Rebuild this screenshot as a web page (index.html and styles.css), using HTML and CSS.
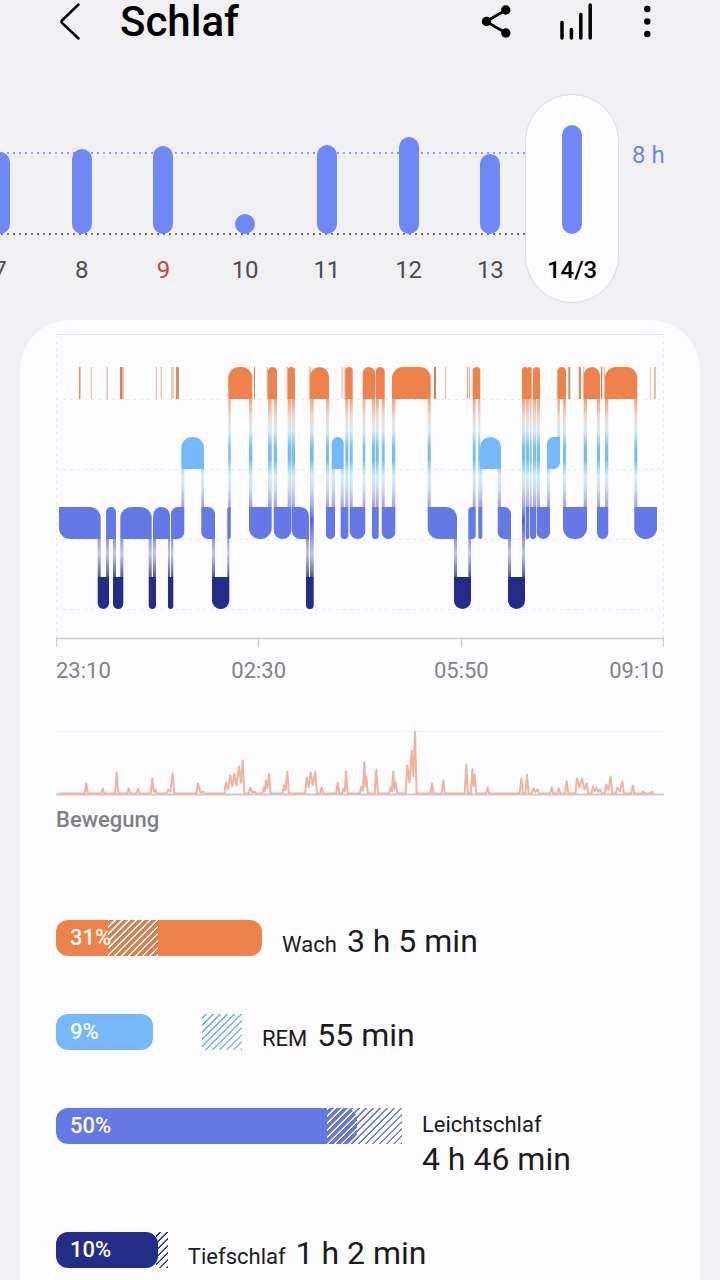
FILE: index.html
```html
<!DOCTYPE html>
<html lang="de">
<head>
  <meta charset="UTF-8" />
  <meta name="viewport" content="width=device-width, initial-scale=1.0" />
  <title>Schlaf</title>
  <link rel="stylesheet" href="styles.css">
</head>
<body>
  <header class="top-bar">
    <button class="icon-button" type="button" aria-label="Zurück">
      <svg width="24" height="44" viewBox="0 0 24 44" fill="none" stroke="#000" stroke-width="2.500" stroke-linecap="round" stroke-linejoin="round">
        <path d="M20.500 4.500 4 20.500q-1.200 1.200 0 2.400L20.500 38.500" />
      </svg>
    </button>
    <h1 class="title">Schlaf</h1>
    <button class="icon-button" type="button" aria-label="Teilen">
      <svg width="32" height="44" viewBox="0 0 32 44">
        <path d="M25 10 5 21.500 25 33" fill="none" stroke="#000" stroke-width="2.800" />
        <circle cx="5.500" cy="21.500" r="4.700" />
        <circle cx="24.800" cy="10" r="4.700" />
        <circle cx="24.800" cy="33" r="4.700" />
      </svg>
    </button>
    <button class="icon-button" type="button" aria-label="Trends">
      <svg width="36" height="44" viewBox="0 0 36 44" stroke="#000" stroke-width="3.500" stroke-linecap="round">
        <path d="M3 22.500V38M12.400 29.500V38M21.800 14.500V38M31.200 5V38" />
      </svg>
    </button>
    <button class="icon-button" type="button" aria-label="Weitere Optionen">
      <svg width="12" height="44" viewBox="0 0 12 44">
        <circle cx="6.300" cy="9" r="3.200" />
        <circle cx="6.300" cy="21.500" r="3.200" />
        <circle cx="6.300" cy="34" r="3.200" />
      </svg>
    </button>
  </header>

  <!-- Day picker -->
  <section class="week">
    <div class="days">
      <button class="day" type="button"><span class="day-bar" style="height: 82px"></span>7</button>
      <button class="day" type="button"><span class="day-bar" style="height: 85px"></span>8</button>
      <button class="day sunday" type="button"><span class="day-bar" style="height: 88px"></span>9</button>
      <button class="day" type="button"><span class="day-bar" style="height: 20px"></span>10</button>
      <button class="day" type="button"><span class="day-bar" style="height: 89px"></span>11</button>
      <button class="day" type="button"><span class="day-bar" style="height: 97px"></span>12</button>
      <button class="day" type="button"><span class="day-bar" style="height: 80px"></span>13</button>
      <button class="day selected" type="button"><span class="day-bar" style="height: 109px"></span>14/3</button>
    </div>
    <div class="goal">8 h</div>
  </section>

  <main class="card">
    <!-- Sleep stages, filled in by script.js -->
    <svg class="chart" viewBox="0 -1 608 315">
      <defs>
        <linearGradient id="link" gradientUnits="userSpaceOnUse" x1="0" y1="65" x2="0" y2="243">
          <stop offset="0" stop-color="#eda685" />
          <stop offset=".1" stop-color="#f2d6cc" />
          <stop offset=".18" stop-color="#d6eaf5" />
          <stop offset=".27" stop-color="#7cc0ec" />
          <stop offset=".34" stop-color="#78bcec" />
          <stop offset=".43" stop-color="#cdeefb" />
          <stop offset=".5" stop-color="#d2daf6" />
          <stop offset=".6" stop-color="#a3a6e4" />
          <stop offset=".68" stop-color="#5563cf" />
          <stop offset=".78" stop-color="#8a93e4" />
          <stop offset=".87" stop-color="#c3c5e8" />
          <stop offset="1" stop-color="#555a9c" />
        </linearGradient>
      </defs>
      <g class="grid">
        <path class="grid-top" d="M0 .5H608" />
        <path d="M.5 0V304M607.5 0V304M0 65.500H608M0 135.500H608M0 205.500H608M0 275.500H608" />
      </g>
      <g id="marks" class="marks"></g>
      <g id="links" fill="url(#link)"></g>
      <g id="stages"></g>
      <path class="axis" d="M0 304.500H608M.5 304V313M202.500 304V313M405.500 304V313M607.500 304V313" />
    </svg>
    <div class="times">
      <span>23:10</span>
      <span>02:30</span>
      <span>05:50</span>
      <span>09:10</span>
    </div>

    <svg class="chart movement" viewBox="0 0 608 65">
      <path class="movement-top" d="M0 .5H608" />
      <path class="movement-base" d="M0 63.500H608" />
      <path id="movement" class="movement-line" />
    </svg>
    <h2 class="caption">Bewegung</h2>

    <ul class="stages">
      <li class="stage awake">
        <div class="track" style="width: 33.9%">
          <div class="bar" style="width: 100%"><i class="hatch inner" style="left: 25.2%; width: 24.3%"></i><span class="percent">31%</span></div>
        </div>
        <p class="info"><span class="name">Wach</span> <span class="value">3 h 5 min</span></p>
      </li>
      <li class="stage rem">
        <div class="track" style="width: 30.6%">
          <i class="hatch" style="left: 78.5%; width: 21.5%"></i>
          <div class="bar" style="width: 52%"><span class="percent">9%</span></div>
        </div>
        <p class="info"><span class="name">REM</span> <span class="value">55 min</span></p>
      </li>
      <li class="stage light">
        <div class="track" style="width: 56.9%">
          <i class="hatch" style="left: 78.3%; width: 21.7%"></i>
          <div class="bar" style="width: 87%"><i class="hatch inner" style="left: 90%; width: 10%"></i><span class="percent">50%</span></div>
        </div>
        <p class="info stacked"><span class="name">Leichtschlaf</span> <span class="value">4 h 46 min</span></p>
      </li>
      <li class="stage deep">
        <div class="track" style="width: 18.4%">
          <i class="hatch" style="left: 89%; width: 11%"></i>
          <div class="bar" style="width: 91%"><span class="percent">10%</span></div>
        </div>
        <p class="info"><span class="name">Tiefschlaf</span> <span class="value">1 h 2 min</span></p>
      </li>
    </ul>
  </main>

  <script src="script.js"></script>
</body>
</html>
```
FILE: styles.css
```css
* {
  box-sizing: border-box;
}
body {
  margin: 0;
  min-height: 100vh;
  display: flex;
  flex-direction: column;
  background-color: #f0f0f3;
  color: #1b1b1e;
  font-family: Roboto, "Liberation Sans", sans-serif;
  overflow-x: hidden;
}
button {
  border: none;
  padding: 0;
  background: none;
  font: inherit;
  cursor: pointer;
}
/* Top bar */
.top-bar {
  display: flex;
  align-items: center;
  gap: 46px;
  height: 44px;
  padding: 0 67px 0 58px;
}
.icon-button svg {
  display: block;
}
.title {
  flex: 1;
  margin: 0 0 0 -8px;
  font-size: 42px;
  line-height: 46px;
  font-weight: 500;
  color: #000;
}
/* Day picker */
.week {
  display: flex;
  margin-top: 50px;
}
.days {
  flex: 1;
  display: flex;
  height: 209px;
  margin-left: -41px; /* first day is cut off by the screen edge */
  background-image:
    linear-gradient(90deg, #8d9be0 2px, transparent 2px),
    linear-gradient(90deg, #77777c 2px, transparent 2px);
  background-size: 6px 2px;
  background-position: 0 58px, 0 139px;
  background-repeat: repeat-x;
}
.day {
  position: relative;
  flex: 1 1 0;
  display: flex;
  flex-direction: column;
  align-items: center;
  justify-content: flex-end;
  padding-bottom: 19px;
  font-size: 24px;
  line-height: 28px;
  color: #4c4c50;
}
.day-bar {
  width: 20px;
  margin-bottom: 22px;
  border-radius: 10px;
  background-color: #7088f6;
}
.sunday {
  color: #c5453c;
}
.selected {
  z-index: 0;
  font-weight: 500;
  color: #000;
}
.selected::before {
  content: "";
  position: absolute;
  z-index: -1;
  inset: 0 -6px;
  border: 1px solid #dcdcdf;
  border-radius: 47px;
  background-color: #fcfcfe;
}
.goal {
  width: 107px;
  padding: 47px 0 0 19px;
  font-size: 24px;
  line-height: 28px;
  color: #7388d8;
}
/* Card */
.card {
  flex: 1;
  margin: 17px 20px 0;
  padding: 13px 36px 0;
  border-radius: 50px 50px 0 0;
  background-color: #fcfcfe;
}
.chart {
  display: block;
  width: 100%;
  height: auto;
}
.grid path {
  fill: none;
  stroke: #ebebee;
  stroke-dasharray: 3 4;
}
.grid .grid-top {
  stroke: #e4e4e8;
  stroke-dasharray: none;
}
.axis {
  fill: none;
  stroke: #cfcfd3;
  stroke-width: 1.5;
}
.marks {
  fill: #d4703c;
}
.times {
  display: grid;
  grid-template-columns: 1fr 2fr 2fr 1fr;
  margin-top: 10px;
  font-size: 22px;
  line-height: 26px;
  text-align: center;
  color: #828286;
}
.times span:first-child {
  text-align: left;
}
.times span:last-child {
  text-align: right;
}
/* Movement */
.movement {
  margin-top: 47px;
}
.movement-top {
  stroke: #f0f0f3;
}
.movement-base {
  stroke: #cfc8ca;
  stroke-width: 2;
}
.movement-line {
  fill: none;
  stroke: #f0b39e;
  stroke-width: 2;
  stroke-linejoin: round;
}
.caption {
  margin: 11px 0 0;
  font-size: 22px;
  line-height: 26px;
  font-weight: 500;
  color: #808084;
}
/* Stage list */
.stages {
  display: flex;
  flex-direction: column;
  gap: 52px;
  margin: 87px 0 0;
  padding: 0;
  list-style: none;
}
.stage {
  display: flex;
  gap: 20px;
}
.awake { --color: #ed824c; --line: #ed824c; }
.rem { --color: #76b9fa; --line: #74b3e2; }
.light { --color: #6478e6; --line: #6b7dc4; }
.deep { --color: #232d88; --line: #232d78; }
.track {
  position: relative;
  flex: none;
  height: 36px;
}
.bar {
  position: relative;
  height: 36px;
  padding-left: 14px;
  border-radius: 12px;
  overflow: hidden;
  background-color: var(--color);
}
.percent {
  position: relative; /* stays above the hatching */
  font-size: 22px;
  line-height: 36px;
  font-weight: 500;
  color: #fff;
}
/* Typical range */
.hatch {
  position: absolute;
  top: 0;
  bottom: 0;
  background: repeating-linear-gradient(-45deg, var(--line) 0 1px, transparent 2px 4px, transparent 5px);
}
.hatch.inner {
  --line: #fff;
  background-color: rgba(120, 130, 110, 0.2);
}
.info {
  display: flex;
  align-items: baseline;
  gap: 10px;
  margin: 0;
  white-space: nowrap;
}
.name {
  font-size: 22px;
  line-height: 34px;
}
.value {
  font-size: 32px;
  line-height: 42px;
}
.stacked {
  flex-direction: column;
  gap: 0;
  padding-bottom: 4px;
}
.stacked .value {
  line-height: 34px;
}
```
FILE: script.js
```js
const svgNs = 'http://www.w3.org/2000/svg';
const blockHeight = 32;
const levels = {
  awake: { top: 33, color: '#ed824c' },
  rem: { top: 103, color: '#76b9fa' },
  light: { top: 173, color: '#6478e6' },
  deep: { top: 243, color: '#232d88' }
};

// [stage, start, end] in the order of the night.
const night = [
  ['light', 3, 44.7], ['deep', 41.7, 53], ['light', 50, 60], ['deep', 57, 67.3],
  ['light', 64.3, 95.7], ['deep', 92.7, 100], ['light', 97, 114], ['deep', 112, 117.3],
  ['light', 115, 128.3], ['rem', 125.3, 148], ['light', 145.3, 159], ['deep', 156, 173.3],
  ['light', 171.3, 174.7], ['awake', 172.3, 196.3], ['light', 193, 215.7], ['awake', 212, 221],
  ['light', 217.7, 235.3], ['awake', 231.7, 239], ['light', 235.7, 253], ['deep', 250, 257.7],
  ['awake', 254, 273], ['light', 270, 279], ['rem', 275.7, 287.7], ['light', 284.7, 292.3],
  ['awake', 289.3, 296.7], ['light', 293.7, 309.3], ['awake', 306.7, 319], ['light', 316, 322.7],
  ['awake', 319.7, 328.7], ['light', 325.7, 339.3], ['awake', 336, 374.7], ['light', 371.7, 401],
  ['deep', 398, 415], ['light', 412.3, 419.7], ['awake', 416.7, 424.3], ['light', 422.3, 426.3],
  ['rem', 424, 445], ['light', 441.7, 455], ['deep', 452, 469], ['awake', 466, 472],
  ['light', 469.7, 473.3], ['awake', 471.3, 475.7], ['light', 474, 480], ['awake', 477, 484],
  ['light', 480.7, 494], ['rem', 491, 504], ['awake', 501.3, 510], ['light', 507, 531],
  ['awake', 527.7, 544], ['light', 541, 552.3], ['awake', 549, 581.3], ['light', 578.3, 601]
];

// Short wake-ups: [x, width, opacity]
const wakeUps = [
  [23, 1.5, .8], [34.7, 1.3, .4], [50.5, 1.3, .5], [64, 2.3, .9], [66.3, 1.5, .5],
  [99.7, 1, .5], [104.7, 1, .5], [115, 3, .35], [120, 3, .8], [198, 1, .9],
  [210.7, 1.3, .5], [230.7, 1, .5], [253.5, 1, .8], [285.5, .9, .5], [288.4, .9, .5],
  [378, 2, .9], [389, .9, .5], [411, 1.2, .6], [413, 1, .5], [512.3, 2, .8],
  [522.7, 2.3, .8], [527, .8, .5], [545, 1.3, .9], [548, .9, .5], [594, 1, .4], [598, 1.8, .5]
];

// Movement peaks: [x, height]
const peaks = [
  [30.3, 10], [46.7, 5], [60.7, 21], [72.7, 5], [82, 5], [96.3, 15], [99.3, 4], [112, 4],
  [116.7, 20], [142, 10], [147, 2], [170, 11], [174.3, 18], [178.3, 20], [183, 27], [186.7, 33],
  [194.3, 6], [198.7, 2], [208, 6], [209.7, 13], [213, 20], [228, 8], [231.3, 22], [250.7, 16],
  [254.7, 21], [259.3, 22], [265.7, 6], [281.7, 11], [287.7, 5], [290, 22], [305.3, 7],
  [308.3, 31], [310.3, 17], [320.3, 24], [334.7, 6], [337.3, 22], [339.7, 11], [351.3, 28],
  [355.7, 43], [359, 62], [376, 10], [387.3, 13], [410.3, 29], [416.3, 24], [418.7, 19],
  [431.7, 6], [465.3, 15], [471, 19], [477.3, 5], [481.7, 4], [495.7, 6], [502.7, 5],
  [510.7, 12], [521, 15], [526, 15], [530.7, 10], [537, 7], [540.3, 6], [544.3, 4],
  [550.3, 9], [554.7, 17], [561.3, 6], [566.3, 12], [576.7, 8], [587.3, 2], [595.7, 2]
];

function addRect(parent, x, y, width, height) {
  const rect = document.createElementNS(svgNs, 'rect');
  rect.setAttribute('x', x);
  rect.setAttribute('y', y);
  rect.setAttribute('width', width);
  rect.setAttribute('height', height);
  parent.appendChild(rect);
  return rect;
}

// A corner is square where a link to the next stage leaves it.
function blockPath(x1, x2, y1, tl, tr, br, bl) {
  const r = Math.min(11, (x2 - x1) / 2);
  const y2 = y1 + blockHeight;
  const c = [tl, tr, br, bl].map(round => round ? r : 0);
  const arc = (size, dx, dy) => `a${size} ${size} 0 0 1 ${dx} ${dy}`;
  return `M${x1 + c[0]} ${y1}H${x2 - c[1]}${arc(c[1], c[1], c[1])}V${y2 - c[2]}${arc(c[2], -c[2], c[2])}` +
    `H${x1 + c[3]}${arc(c[3], -c[3], -c[3])}V${y1 + c[0]}${arc(c[0], c[0], -c[0])}Z`;
}

function drawNight() {
  const stages = document.getElementById('stages');
  const links = document.getElementById('links');

  night.forEach(([stage, start, end], i) => {
    const top = levels[stage].top;
    const prev = night[i - 1];
    const next = night[i + 1];
    const prevAbove = !prev || levels[prev[0]].top < top;
    const nextAbove = !next || levels[next[0]].top < top;

    const path = document.createElementNS(svgNs, 'path');
    path.setAttribute('d', blockPath(start, end, top, !prevAbove, !nextAbove, nextAbove, prevAbove));
    path.setAttribute('fill', levels[stage].color);
    stages.appendChild(path);

    if (next) {
      const nextTop = levels[next[0]].top;
      const y = Math.min(top, nextTop) + blockHeight;
      addRect(links, next[1], y, end - next[1], Math.max(top, nextTop) - y);
    }
  });
}

function drawWakeUps() {
  const marks = document.getElementById('marks');
  wakeUps.forEach(([x, width, opacity]) => {
    addRect(marks, x, levels.awake.top, width, blockHeight).setAttribute('opacity', opacity);
  });
}

function drawMovement() {
  const base = 62.5;
  let d = `M3 ${base}`;
  peaks.forEach(([x, height], i) => {
    const prev = peaks[i - 1];
    const next = peaks[i + 1];
    if (!prev || x - prev[0] > 5) {
      d += `L${x - 1.6} ${base}`;
    }
    d += `L${x} ${base - height}`;
    if (next && next[0] - x <= 5) {
      d += `L${(x + next[0]) / 2} ${base - Math.min(height, next[1]) * .4}`;
    } else {
      d += `L${x + 1.6} ${base}`;
    }
  });
  document.getElementById('movement').setAttribute('d', d + `H598`);
}

drawNight();
drawWakeUps();
drawMovement();
```
